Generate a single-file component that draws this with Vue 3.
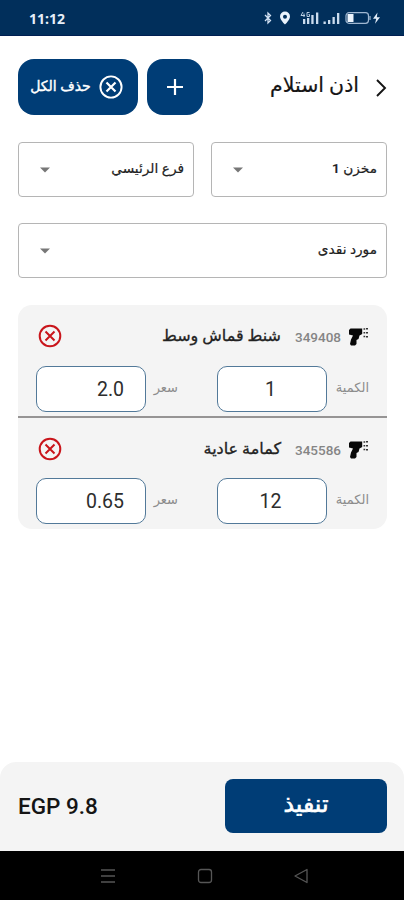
<template>
  <div class="screen">
    <div class="status-bar">
      <span class="clock">11:12</span>
      <div class="status-icons">
        <svg class="bluetooth" viewBox="0 0 8 14" width="8" height="14">
          <path d="M1 4l5.500 5.500L4 12V2l2.500 2.500L1 10" fill="none" stroke="#d3e2f4" stroke-width="1.300" />
        </svg>
        <svg class="pin" viewBox="0 0 12 14" width="12" height="14">
          <path d="M6 .5a5 5 0 0 0-5 5C1 9 6 13.500 6 13.500S11 9 11 5.500a5 5 0 0 0-5-5zm0 3.200a2 2 0 1 1 0 4 2 2 0 0 1 0-4z" fill="#e9f2fc" />
        </svg>
        <svg class="signal" viewBox="0 0 42 14" width="42" height="14">
          <g fill="#cbdcee">
            <path d="M3 8h2.300v5H3zM7 7h2.300v6H7zM11.300 4h2.300v9h-2.300zM16 1.500h2.300V13H16zM23.500 10.500h2.300V13h-2.300zM28 9h2.300v4H28zM32.500 6h2.300v7h-2.300zM37 2h2.300v11H37z" />
          </g>
          <path d="M3 1L1 4.500h4M4 2.500V6M9.500 1.500H7v4h2.500V3.500H8.500" fill="none" stroke="#cbdcee" stroke-width=".9" />
        </svg>
        <svg class="battery" viewBox="0 0 37 14" width="37" height="14">
          <rect x="1" y="1.700" width="22.500" height="10.600" rx="3" fill="none" stroke="#9fb7d1" stroke-width="1.200" />
          <path d="M2.500 3h6v8h-6z" fill="#edf5fd" />
          <path d="M25 5v4" stroke="#9fb7d1" stroke-width="1.200" />
          <path d="M32.500 1.500L28 7.800h3.200l-1.200 5 5-6.500h-3.200z" fill="#e2edf9" />
        </svg>
      </div>
    </div>

    <header class="header">
      <svg class="back" viewBox="0 0 12 20" width="12" height="20">
        <path d="M2 2l8 8-8 8" fill="none" stroke="#141414" stroke-width="1.900" />
      </svg>
      <h1 class="title">اذن استلام</h1>
      <button class="add-btn">
        <svg viewBox="0 0 18 18" width="18" height="18">
          <path d="M9 1v16M1 9h16" stroke="#fff" stroke-width="2.200" />
        </svg>
      </button>
      <button class="clear-btn">
        <svg viewBox="0 0 24 24" width="24" height="24">
          <circle cx="12" cy="12" r="10.600" fill="none" stroke="#fff" stroke-width="1.900" />
          <path d="M7.500 7.500l9 9M16.500 7.500l-9 9" stroke="#fff" stroke-width="2.200" />
        </svg>
        <span>حذف الكل</span>
      </button>
    </header>

    <main class="content">
      <div class="selects">
        <div v-for="s in selects" :key="s.label" class="select" :class="{ wide: s.wide }">
          <span>{{ s.label }}</span>
          <svg viewBox="0 0 10 6" width="10" height="6">
            <path d="M0 .5h10L5 5.500z" fill="#777" />
          </svg>
        </div>
      </div>

      <div class="items">
        <div v-for="item in items" :key="item.code" class="item">
          <div class="item-head">
            <svg class="scanner" viewBox="0 0 20 18" width="20" height="18">
              <path d="M0 2L1.500.5h11.700V6L10.500 7.500 9.500 11 7.500 12v4l-1.500 1.500H2L1 16l1-4.500L4 7.500 0 6.500z" fill="#080808" />
              <path d="M14.500 1h1.700M17 .8h2M14.500 4.800h1.700M17 4.800h2M14.500 8.500h1.700M17 8.700h2" stroke="#333" stroke-width="1.600" />
            </svg>
            <span class="code">{{ item.code }}</span>
            <span class="name">{{ item.name }}</span>
            <svg class="remove" viewBox="0 0 24 24" width="24" height="24">
              <circle cx="12" cy="12" r="10.300" fill="none" stroke="#c9151b" stroke-width="2" />
              <path d="M7.500 7.500l9 9M16.500 7.500l-9 9" stroke="#c9151b" stroke-width="2" />
            </svg>
          </div>
          <div class="item-fields">
            <span class="label qty-label">الكمية</span>
            <div class="field qty">{{ item.qty }}</div>
            <span class="label price-label">سعر</span>
            <div class="field price">{{ item.price }}</div>
          </div>
        </div>
      </div>
    </main>

    <footer class="footer">
      <button class="submit">تنفيذ</button>
      <span class="total">EGP 9.8</span>
    </footer>

    <nav class="system-nav">
      <svg viewBox="0 0 16 16" width="16" height="16">
        <path d="M1 2h14M1 8h14M1 14h14" stroke="#565656" stroke-width="1.500" />
      </svg>
      <svg viewBox="0 0 16 16" width="16" height="16">
        <rect x="1.500" y="1.500" width="13" height="13" rx="2.500" fill="none" stroke="#565656" stroke-width="1.300" />
      </svg>
      <svg viewBox="0 0 16 16" width="16" height="16">
        <path d="M14 1.500v13L2 8z" fill="none" stroke="#565656" stroke-width="1.300" stroke-linejoin="round" />
      </svg>
    </nav>
  </div>
</template>

<script setup>
import { ref } from 'vue'

const selects = ref([
  { label: 'مخزن 1' },
  { label: 'فرع الرئيسي' },
  { label: 'مورد نقدى', wide: true }
])

const items = ref([
  { code: '349408', name: 'شنط قماش وسط', qty: '1', price: '2.0' },
  { code: '345586', name: 'كمامة عادية', qty: '12', price: '0.65' }
])
</script>

<style>
body {
  margin: 0;
  background: #fff;
}
</style>

<style scoped>
.screen {
  display: flex;
  flex-direction: column;
  width: 404px;
  height: 900px;
  overflow: hidden;
  background: #fff;
  color: #222;
  direction: rtl;
  font-family: Roboto, "DejaVu Sans", sans-serif;
}

.screen * {
  box-sizing: border-box;
}

svg {
  display: block;
  flex: none;
}

button {
  border: 0;
  padding: 0;
  color: #fff;
  background: #003d76;
  font-family: inherit;
}

/* status bar */
.status-bar {
  display: flex;
  direction: ltr;
  justify-content: space-between;
  flex: none;
  height: 36px;
  padding: 11px 22px 0 29px;
  background: #012f5b;
  border-bottom: 1px solid #001f52;
}

.clock {
  color: #e6eef8;
  font: 700 14px/16px "Open Sans", sans-serif;
}

.status-icons {
  display: flex;
}

.bluetooth {
  margin-left: -2px;
}

.pin {
  margin-left: 7px;
}

.signal {
  margin-left: 9px;
}

.battery {
  margin-left: 3px;
}

/* header */
.header {
  display: flex;
  align-items: center;
  flex: none;
  height: 56px;
  margin-top: 23px;
  padding: 0 17px 0 18px;
}

.back {
  margin-top: 1px;
}

.title {
  flex: 1;
  margin: -5px 16px 0 0;
  color: #151515;
  font-size: 20.500px;
  font-weight: 400;
  -webkit-text-stroke: 0.2px #151515;
}

.add-btn,
.clear-btn {
  display: flex;
  align-items: center;
  justify-content: center;
  height: 56px;
  border-radius: 16px;
}

.add-btn {
  width: 56px;
}

.clear-btn {
  gap: 8px;
  width: 120px;
  margin-right: 9px;
  padding-right: 3px;
  font-size: 14px;
  font-weight: 400;
  -webkit-text-stroke: 0.4px #fff;
}

.clear-btn span {
  margin-top: -2px;
  white-space: nowrap;
}

/* selects */
.content {
  flex: 1;
  padding: 27px 17px 0 18px;
}

.selects {
  display: grid;
  grid-template-columns: 176px 176px;
  justify-content: space-between;
  row-gap: 26px;
}

.select {
  display: flex;
  align-items: center;
  justify-content: space-between;
  height: 55px;
  padding: 0 9px 0 21px;
  border: 1px solid #b5b5b5;
  border-radius: 4px;
  font-size: 13.700px;
  font-weight: 500;
  -webkit-text-stroke: 0.2px #222;
}

.select span {
  margin-top: -4px;
}

.wide {
  grid-column: span 2;
}

/* items */
.items {
  margin-top: 27px;
  border-radius: 14px;
  background: #f4f4f4;
}

.item {
  height: 111px;
  padding: 18px 18px 0 19px;
}

.item + .item {
  height: 113px;
  border-top: 2px solid #969494;
}

.item-head {
  display: flex;
  align-items: center;
  height: 25px;
}

.scanner {
  margin-top: 2px;
}

.code {
  margin: 3px 8px 0 0;
  width: 47px;
  color: #858585;
  font-size: 13.500px;
  font-weight: 500;
}

.name {
  flex: 1;
  margin-right: 13px;
  color: #222;
  font-size: 16px;
  font-weight: 500;
  -webkit-text-stroke: 0.3px #222;
}

.remove {
  margin-left: 1px;
}

.item-fields {
  display: flex;
  align-items: center;
  margin-top: 17px;
}

.item:first-child .item-fields {
  margin-top: 18px;
}

.label {
  flex: none;
  margin-top: -3px;
  color: #8c8c8c;
  font-size: 13px;
  white-space: nowrap;
}

.qty-label {
  width: 42px;
}

.price-label {
  width: 32px;
}

.field {
  flex: none;
  width: 110px;
  height: 46px;
  border: 1.500px solid #527999;
  border-radius: 10px;
  background: #fff;
  color: #2d2d2d;
  font-size: 19.500px;
  line-height: 45px;
}

.qty {
  margin-left: 39px;
  padding-right: 3px;
  text-align: center;
}

.price {
  margin-right: auto;
  padding-right: 21px;
}

/* footer */
.footer {
  display: flex;
  align-items: center;
  justify-content: space-between;
  flex: none;
  height: 89px;
  padding: 0 17px 1px 18px;
  border-radius: 16px 16px 0 0;
  background: #f4f4f4;
}

.submit {
  width: 162px;
  height: 54px;
  padding-bottom: 4px;
  border-radius: 8px;
  font-size: 23.500px;
  font-weight: 400;
  -webkit-text-stroke: 0.7px #fff;
}

.total {
  direction: ltr;
  color: #151515;
  font-size: 22.500px;
  font-weight: 500;
}

.system-nav {
  display: flex;
  direction: ltr;
  justify-content: space-between;
  flex: none;
  height: 49px;
  padding: 17px 95px 0 100px;
  background: #000;
}
</style>
